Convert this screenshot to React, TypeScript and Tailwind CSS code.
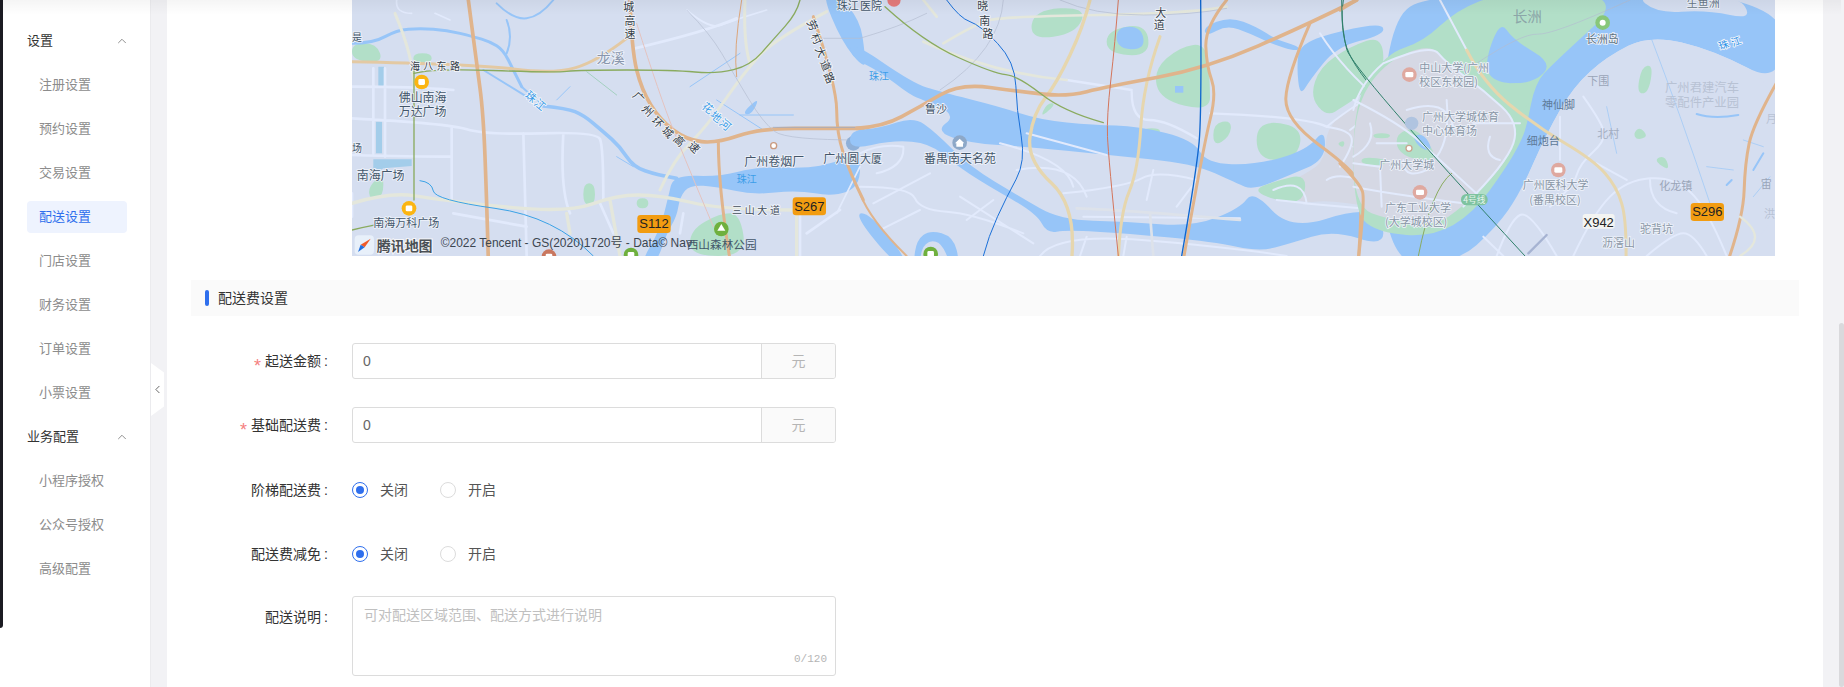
import { ChevronLeft, ChevronUp } from "lucide-react";

// rounds the corners of a traced outline, so "M.. L.. L.. Z" reads like a map shape
const smooth = (d: string) =>
  d
    .split("M")
    .filter((s) => s.trim())
    .map((sub) => {
      const closed = sub.includes("Z");
      const pts = (sub.match(/-?\d+,-?\d+/g) ?? []).map((p) => p.split(",").map(Number));
      const mid = (a: number[], b: number[]) => `${(a[0] + b[0]) / 2},${(a[1] + b[1]) / 2}`;
      if (pts.length < 3) return `M${pts.map((p) => p.join(",")).join(" L")}`;
      if (closed) {
        let out = `M${mid(pts[pts.length - 1], pts[0])}`;
        pts.forEach((p, i) => {
          out += ` Q${p[0]},${p[1]} ${mid(p, pts[(i + 1) % pts.length])}`;
        });
        return out + " Z";
      }
      let out = `M${pts[0].join(",")}`;
      for (let i = 1; i < pts.length - 1; i++) {
        const end = i === pts.length - 2 ? pts[i + 1].join(",") : mid(pts[i], pts[i + 1]);
        out += ` Q${pts[i][0]},${pts[i][1]} ${end}`;
      }
      return out;
    })
    .join(" ");

const P = ({ d, c, w }: { d: string; c: string; w: number }) => (
  <path d={smooth(d)} stroke={c} strokeWidth={w} fill="none" strokeLinejoin="round" strokeLinecap="round" />
);

const F = ({ d, c }: { d: string; c: string }) => <path d={smooth(d)} fill={c} />;

const ORANGE = "#e0b48c";
const YELLOW = "#e6d6ae";
const WHITE = "#e2eafc";
const BEIGE = "#e4e7dc";
const WATER = "#97c5f8";
const GREEN = "#b2dfc8";

const T = ({
  x,
  y,
  s = 36,
  c = "#43566a",
  children,
  halo = true,
}: {
  x: number;
  y: number;
  s?: number;
  c?: string;
  children: string;
  halo?: boolean;
}) => (
  <text
    x={x}
    y={y}
    fontSize={s}
    fill={c}
    stroke={halo ? "#eef2fa" : "none"}
    strokeWidth={halo ? 5 : 0}
    paintOrder="stroke"
    fontFamily="'Noto Sans CJK SC', sans-serif"
  >
    {children}
  </text>
);

// road names run along the road, one rotated glyph per point
const Along = ({ pts, text, s = 33, c = "#333d48" }: { pts: [number, number, number][]; text: string; s?: number; c?: string }) => (
  <>
    {pts.map(([x, y, r], i) => (
      <text
        key={i}
        x={x}
        y={y}
        fontSize={s}
        fill={c}
        stroke="#f3f5fa"
        strokeWidth={5}
        paintOrder="stroke"
        textAnchor="middle"
        dominantBaseline="central"
        transform={`rotate(${r} ${x} ${y})`}
        fontFamily="'Noto Sans CJK SC', sans-serif"
      >
        {text[i]}
      </text>
    ))}
  </>
);

const Badge = ({ x, y, w = 100, label, bg = "#f29c11" }: { x: number; y: number; w?: number; label: string; bg?: string }) => (
  <g>
    <rect x={x} y={y} width={w} height={54} rx={10} fill={bg} />
    <text x={x + w / 2} y={y + 40} fontSize={39} fill="#222" textAnchor="middle" fontFamily="'Liberation Sans', sans-serif">
      {label}
    </text>
  </g>
);

const Pin = ({ x, y, c, r = 22, inner = "#fff" }: { x: number; y: number; c: string; r?: number; inner?: string }) => (
  <g>
    <circle cx={x} cy={y} r={r} fill={c} />
    <rect x={x - r * 0.45} y={y - r * 0.4} width={r * 0.9} height={r * 0.8} rx={4} fill={inner} />
  </g>
);

const MapView = () => (
  <svg viewBox="352 0 1423 256" className="block w-[1423px] h-[256px] shrink-0">
    <rect x="352" y="0" width="1423" height="256" fill="#d5def0" />

    {/* left part */}
    <g transform="translate(340 0) scale(0.33333)">
      <F c={GREEN} d="M36,130 L110,130 L130,190 L36,180 Z M220,160 L275,160 L275,190 L220,190 Z M85,560 L130,520 L130,590 L90,600 Z M730,550 L765,550 L765,615 L730,615 Z M1050,690 L1140,640 L1200,640 L1220,768 L1050,768 Z M890,595 L925,595 L925,625 L890,625 Z" />
      <path fill="#a3cdea" d="M108,365 L126,365 L126,460 L108,460 Z M115,200 L132,200 L132,260 L115,260 Z M100,478 L215,478 L215,498 L130,505 L100,525 Z" />
      <P c={WATER} w={9} d="M36,130 L100,130 L170,90 L240,85 L320,90 L400,110 L450,125 L490,150 L520,210 L545,260" />
      <P c={WATER} w={11} d="M610,318 L680,325 L730,345 L790,395 L840,440 L880,500 L950,525 L1010,535" />
      <P c={WATER} w={6} d="M545,260 L610,318 M430,210 L560,290 M500,60 L520,110 L500,160 M470,10 L520,60 L600,50 L640,0" />
      <F c={WATER} d="M1000,525 L1140,530 L1250,500 L1400,505 L1480,490 L1560,455 L1560,560 L1480,590 L1370,570 L1240,585 L1130,560 L1050,555 L1020,590 L1010,650 L980,700 L950,790 L900,790 L960,690 L985,590 Z" />
      <F c={WATER} d="M1445,-20 L1490,-20 L1560,60 L1575,160 L1575,210 L1505,125 Z M1205,340 L1260,290 L1235,345 Z" />
      <P c={WATER} w={3} d="M690,260 L650,300 M1050,260 L1200,160 M1130,300 L1270,390 M1200,345 L1360,345 M830,470 L880,500" />

      <P c={WHITE} w={8} d="M36,260 L220,260 L340,270 M36,355 L320,370 L440,405 L770,395 L790,440 L790,600 M36,465 L210,470 L335,470 M100,205 L100,460 M135,205 L135,470 M335,380 L335,600 M550,400 L560,768 M670,400 L660,570 L690,640 M885,145 L1100,95 L1190,55 M36,580 L36,650 M1030,640 L1020,700 M1400,700 L1500,630 M1380,640 L1380,768 M340,640 L560,680 M780,610 L820,700" />
      <P c={WHITE} w={5} d="M170,0 L165,40 L215,40 M285,40 L330,60 M1040,30 L1110,90 L1180,60 L1280,30 M1490,640 L1560,500" />

      <P c={BEIGE} w={9} d="M165,40 L220,170 L222,260" />
      <P c={BEIGE} w={9} d="M1215,0 L1210,130 L1230,190 M1460,35 L1300,120 L1210,220 L1100,380 L1000,480 L960,570" />
      <P c={BEIGE} w={10} d="M36,610 L150,575 L300,600 L680,640 L830,585 L960,585 L1150,630 L1360,630 M810,600 L840,768 M1370,640 L1370,768 M680,640 L690,700" />
      <P c="#e3c9a3" w={9} d="M36,185 L400,192 L640,222 L770,185 L860,115" />

      <P c="#dca67a" w={3} d="M1205,0 L1180,150 L1190,230" />
      <P c={ORANGE} w={11} d="M385,0 L410,190 L430,340 L440,600 L445,780" />
      <P c={ORANGE} w={11} d="M870,0 L875,150 L905,270 L960,360 L1040,420 L1130,430 L1260,385 L1470,385 L1570,385" />
      <P c={ORANGE} w={9} d="M1135,425 L1135,560 L1170,780" />
      <P c={ORANGE} w={9} d="M1420,50 L1490,260 L1490,400 L1530,520 L1570,600" />
      <P c="#e4c3c0" w={3} d="M890,70 L960,290 L1040,490 L1120,680" />
      <P c="#b4bdd0" w={2} d="M1040,30 L1110,100 L1180,220 L1270,370 L1340,420 L1560,420 M1440,115 L1560,115" />
      <P c="#93a8cc" w={2} d="M1300,382 L1560,382" />

      <P c="#8aab5f" w={4} d="M222,205 L222,600 M36,690 L100,675 L130,670" />
      <P c="#8aab5f" w={4} d="M222,220 L280,205 L640,218 L720,210 L1000,210 L1130,222 L1232,196 L1300,118 L1370,40 L1380,0" />
      <P c="#a4d0c0" w={3} d="M740,215 L830,285" />
      <P c="#3aa2e6" w={3} d="M240,542 L275,546 L285,600 L645,650 L760,768" />

      <T x={770} y={190} s={42} c="#8996ac">龙溪</T>
      <text x={210} y={210} fontSize={30} fill="#333d48" stroke="#f3f5fa" strokeWidth={5} paintOrder="stroke" letterSpacing={10} fontFamily="'Noto Sans CJK SC', sans-serif">海八东路</text>
      <T x={176} y={306}>佛山南海</T>
      <T x={176} y={348}>万达广场</T>
      <T x={50} y={540}>南海广场</T>
      <T x={100} y={682} s={33}>南海万科广场</T>
      <T x={36} y={122} s={30}>是</T>
      <T x={36} y={455} s={30}>场</T>
      <T x={1213} y={498}>广州卷烟厂</T>
      <T x={1450} y={490}>广州圆</T>
      <T x={1190} y={548} s={30} c="#3b9de8" halo={false}>珠江</T>
      <text x={1176} y={642} fontSize={30} fill="#444f5c" stroke="#eef2fa" strokeWidth={5} paintOrder="stroke" letterSpacing={8} fontFamily="'Noto Sans CJK SC', sans-serif">三山大道</text>
      <Along pts={[[575, 288, 40], [602, 312, 40]]} text="珠江" c="#3b9de8" />
      <Along pts={[[1105, 322, 40], [1130, 348, 40], [1158, 372, 40]]} text="花地河" c="#3b9de8" />
      <Along pts={[[866, 18, 0], [870, 60, 0], [870, 100, 0]]} text="城高速" />
      <Along pts={[[898, 290, 45], [925, 330, 45], [955, 365, 45], [985, 395, 45], [1020, 420, 45], [1065, 440, 45]]} text="广州环城高速" />
      <Along pts={[[1420, 75, 65], [1432, 115, 65], [1445, 155, 65], [1460, 195, 65], [1470, 232, 65]]} text="劳村大道路" />
      <T x={1490} y={30} s={33}>珠江</T>

      <Pin x={245} y={246} c="#fbb512" />
      <Pin x={207} y={625} c="#fbb512" />
      <circle cx={1301} cy={437} r={9} fill="#fff" stroke="#c99a80" strokeWidth={4} />
      <circle cx={1540} cy={430} r={22} fill="#8fb0d8" />
      <circle cx={1144} cy={687} r={22} fill="#6fb03e" />
      <path d="M1144,672 L1156,692 L1132,692 Z" fill="#fff" />
      <Pin x={627} y={770} c="#c9775f" />
      <Pin x={873} y={765} c="#6fb03e" />
      <Badge x={892} y={645} label="S112" />
      <Badge x={1358} y={592} label="S267" />
    </g>

    {/* middle part */}
    <g transform="translate(860 0) scale(0.33333)">
      <F c={GREEN} d="M520,30 L680,20 L650,100 L510,120 Z M880,210 L960,140 L1040,130 L1050,250 L1050,335 L900,300 Z M1190,360 L1330,380 L1310,480 L1190,480 Z M560,310 L590,310 L540,355 Z M850,385 L900,385 L900,405 L850,400 Z M1060,370 L1115,360 L1110,410 L1060,440 Z" />
      <F c={GREEN} d="M740,90 L860,70 L870,170 L740,160 Z" />
      <F c={WATER} d="M770,80 L845,80 L855,150 L770,145 Z" />
      <path fill={WATER} d="M945,258 L970,258 L970,278 L945,278 Z" />
      <F c={WATER} d="M-30,120 L160,250 L240,275 L420,320 L540,360 L700,375 L835,378 L1000,420 L1040,490 L1190,495 L1340,450 L1395,385 L1395,480 L1290,525 L1180,570 L1130,550 L1000,490 L740,465 L500,440 L330,430 L225,395 L290,345 L190,300 L150,285 L60,215 L-30,170 Z" />
      <F c={WATER} d="M-30,390 L60,385 L160,350 L225,395 L330,500 L480,590 L600,660 L800,665 L1000,680 L1140,625 L1180,570 L1290,690 L1500,625 L1570,660 L1570,740 L1420,690 L1290,730 L1200,755 L1060,725 L800,700 L620,690 L560,700 L530,640 L380,555 L280,490 L210,430 L100,420 L-30,450 Z" />
      <F c={WATER} d="M-20,640 L30,640 L150,790 L100,790 Z M160,790 L170,720 L210,690 L280,710 L300,790 L270,790 L245,730 L210,720 L185,745 L180,790 Z" />
      <F c={WATER} d="M1320,130 L1450,90 L1570,70 L1570,105 L1430,140 L1350,240 L1320,290 L1310,200 Z M1030,80 L1110,50 L1190,80 L1250,120 L1320,140 L1310,155 L1230,130 L1170,100 L1100,75 L1040,110 Z" />
      <F c="#d5d8e4" d="M1400,380 L1500,300 L1570,285 L1570,625 L1400,600 L1330,610 L1240,570 L1340,520 L1395,480 Z" />
      <F c={GREEN} d="M1350,290 L1380,200 L1470,140 L1570,105 L1570,240 L1450,320 L1400,350 Z M1180,570 L1240,545 L1340,520 L1330,610 L1240,600 Z M1500,490 L1560,480 L1560,510 L1510,500 Z M1430,430 L1455,420 L1450,445 Z" />

      <P c={WHITE} w={7} d="M815,275 L815,360 L920,360 L1010,415 M1050,340 L1340,350 L1400,380 M620,240 L815,270" />
      <P c={WHITE} w={6} d="M0,560 L150,560 L180,630 L340,640 L490,700 M70,685 L180,630 M130,440 L60,430 L0,460 M130,440 L135,500 L50,520 M210,520 L40,610 M300,590 L520,730 M400,600 L320,660 M420,430 L620,480 L640,560 M470,510 L640,480 L680,590 M610,580 L800,560 L890,510 L1010,540 M880,510 L860,600 M1010,540 L950,620 M540,768 L590,700 L1100,740 L1280,768 M660,768 L680,710 M790,768 L800,710 M670,650 L1140,655 M500,400 L740,465" />
      <P c={WHITE} w={6} d="M1240,570 L1330,530 L1340,610 M1340,610 L1250,600 M1330,610 L1560,630 M1400,540 L1440,510 L1560,560 M1400,380 L1470,390 L1480,440 L1440,500 M1380,100 L1450,210 L1560,300 M1400,380 L1500,300 L1560,280 M1470,390 L1560,320 M1480,440 L1560,470" />
      <P c="#dde2ea" w={8} d="M650,625 L800,630 L1140,660 M870,640 L880,768" />
      <P c={BEIGE} w={8} d="M250,130 L350,70 L430,50 L1000,40 L1100,20" />
      <P c={BEIGE} w={8} d="M190,0 L230,50 M190,125 L400,220 L620,240" />
      <P c="#b4bdd0" w={2} d="M0,115 L120,80 L200,40 M600,0 L700,45 L1000,45 L1100,25 M240,270 L420,150 L430,0" />

      <P c={YELLOW} w={10} d="M690,0 L670,80 L590,250 L520,340 L500,480 L650,620 L635,780" />
      <P c={YELLOW} w={9} d="M900,110 L850,250 L835,510 L780,640 L775,780" />
      <P c={ORANGE} w={11} d="M-10,385 L70,380 L180,320 L300,250 L480,275 L620,290 L740,260 L1040,205 L1350,70 L1490,0" />
      <P c={ORANGE} w={9} d="M1100,0 L1035,80 L1040,200 L1070,280 L1030,440 L970,780" />
      <P c={ORANGE} w={9} d="M1350,70 L1280,230 L1275,360 L1480,510 L1510,580 L1495,780" />
      <P c={ORANGE} w={6} d="M0,580 L30,660 L140,768" />

      <P c="#1a6fd8" w={3} d="M260,0 L300,55 L360,75 L465,185 L470,330 L497,485 L440,590 L385,710 L370,768" />
      <P c="#d4745a" w={3} d="M775,0 L765,130 L740,350 L745,470 L775,768" />
      <P c="#0f66cf" w={4} d="M1022,0 L1025,340 L1010,510 L965,768" />
      <P c="#8aab5f" w={4} d="M75,20 L190,125 L400,220 L475,228 L610,335 L730,368" />
      <P c="#2f7f6a" w={3} d="M1450,0 L1440,60 L1470,190 L1560,290" />

      <T x={0} y={30} s={33}>医院</T>
      <T x={27} y={240} s={30} c="#3b9de8" halo={false}>珠江</T>
      <T x={195} y={338} s={33}>鲁沙</T>
      <T x={0} y={490} s={33}>大厦</T>
      <T x={192} y={490}>番禺南天名苑</T>
      <Along pts={[[368, 15, 0], [374, 60, 0], [384, 98, 0]]} text="晓南路" />
      <Along pts={[[902, 35, 0], [898, 72, 0]]} text="大道" />

      <circle cx={102} cy={0} r={20} fill="#e47b7b" />
      <circle cx={299} cy={428} r={22} fill="#8da8c8" />
      <path d="M299,416 L313,430 L309,430 L309,440 L289,440 L289,430 L285,430 Z" fill="#fff" />
      <Pin x={212} y={762} c="#6fb03e" />
    </g>

    {/* right part */}
    <g transform="translate(1340 0) scale(0.33333)">
      <F c={WATER} d="M130,70 L290,-30 L1330,-30 L1330,260 L1120,150 L930,105 L800,170 L700,260 L620,400 L540,580 L470,680 L350,790 L120,790 Z" />
      <F c="#d5def0" d="M930,105 L1120,150 L1330,260 L1330,800 L470,800 L540,580 L620,400 L700,260 L800,170 Z M880,-20 L1190,-20 L1240,60 L1100,30 L950,40 Z" />
      <F c={GREEN} d="M40,300 L140,160 L250,125 L350,30 L480,-20 L870,-20 L640,190 L585,250 L560,380 L540,430 L500,500 L400,640 L280,710 L120,700 L40,640 Z" />
      <F c={WATER} d="M480,60 L520,120 L640,190 L580,250 L470,250 L430,200 Z" />
      <F c={GREEN} d="M470,250 L585,250 L570,320 L520,330 Z" />
      <F c="#d5d8e4" d="M40,330 L130,190 L270,130 L320,190 L430,270 L540,370 L500,490 L370,620 L280,680 L150,660 L40,620 Z" />
      <F c={GREEN} d="M170,400 L230,380 L300,480 L220,480 L170,450 Z M70,470 L150,480 L120,500 L60,490 Z M100,400 L150,400 L150,415 L100,415 Z" />
      <F c={WATER} d="M215,410 L250,400 L280,450 L245,450 Z" />

      <P c={WHITE} w={6} d="M130,190 L60,250 L40,330 M130,190 L270,130 L320,190 L430,270 L540,370 L500,490 L370,620 M40,300 L180,370 L300,480 L420,590 M90,370 L110,430 L40,470 M110,430 L200,430 M200,330 L320,290 L340,380 M40,560 L140,580 L370,610 M120,500 L125,620 M190,480 L190,550 L280,500 M320,300 L330,420 L290,470 M40,490 L120,500 M450,410 L430,470 L480,480 M540,370 L400,370" />
      <P c={WHITE} w={6} d="M300,0 L380,150 M470,768 L510,660 L570,630 L650,768 M430,710 L490,768 M700,768 L760,640 L860,540 L1000,530 L1100,620 L1160,768 M660,350 L660,480 M730,290 L780,360 L800,420 L720,490 L700,560 L630,620 M770,490 L860,540 M930,540 L930,620 L1010,640 M920,768 L1000,700 L1060,700 L1100,768" />
      <P c="#b4bdd0" w={2} d="M410,190 L545,100 L640,105 L870,0" />
      <P c="#a6b3d2" w={7} d="M565,760 L620,705" />
      <P c={WATER} w={2} d="M930,105 L1020,340 L1110,610 M1210,420 L1270,440 M800,320 L830,460 M1100,500 L1180,510 M1240,590 L1290,530" />
      <P c={WATER} w={6} d="M1070,342 L1120,358 L1195,345 M1240,510 L1270,460 M1160,555 L1175,540" />
      <F c={GREEN} d="M905,200 L940,195 L925,280 L890,280 Z M880,400 L900,380 L925,410 L890,420 Z M940,480 L975,465 L990,515 Z" />

      <P c={YELLOW} w={9} d="M380,150 L430,250 L590,380 L760,480 L830,560 L860,660 L858,780" />
      <P c={ORANGE} w={10} d="M0,30 L50,0" />
      <P c={ORANGE} w={9} d="M0,490 L60,550 L75,600 L55,780" />
      <P c={ORANGE} w={9} d="M1320,230 L1240,370 L1215,490 L1210,650 L1165,780" />
      <P c={BEIGE} w={7} d="M1200,650 L1290,715 L1200,768" />
      <P c="#8aab5f" w={3} d="M335,520 L275,565 L235,768" />
      <P c="#2f7f6a" w={3} d="M5,0 L5,90 L35,205 L555,768" />

      <T x={518} y={66} s={44} c="#8ca6a8" halo={false}>长洲</T>
      <T x={1040} y={22} s={33} c="#667788">生鱼洲</T>
      <T x={737} y={128} s={33} c="#5b7080">长洲岛</T>
      <T x={238} y={215} s={33} c="#8996a5">中山大学(广州</T>
      <T x={238} y={257} s={33} c="#8996a5">校区东校园)</T>
      <T x={246} y={364} s={33} c="#8996a5">广州大学城体育</T>
      <T x={246} y={406} s={33} c="#8996a5">中心体育场</T>
      <T x={118} y={506} s={33} c="#8996a5">广州大学城</T>
      <T x={135} y={636} s={33} c="#8996a5">广东工业大学</T>
      <T x={135} y={678} s={33} c="#8996a5">(大学城校区)</T>
      <T x={742} y={256} s={33} c="#9aa5b8" halo={false}>下围</T>
      <T x={606} y={326} s={33} c="#5e7a98" halo={false}>神仙脚</T>
      <T x={560} y={435} s={33} c="#5e7a98" halo={false}>细炮台</T>
      <T x={772} y={414} s={33} c="#a3adc0" halo={false}>北村</T>
      <T x={975} y={276} s={37} c="#b8c2d4" halo={false}>广州君建汽车</T>
      <T x={975} y={322} s={37} c="#b8c2d4" halo={false}>零配件产业园</T>
      <T x={548} y={568} s={33} c="#8996a5">广州医科大学</T>
      <T x={568} y={612} s={33} c="#8996a5">(番禺校区)</T>
      <T x={958} y={570} s={33} c="#9aa5b8" halo={false}>化龙镇</T>
      <T x={900} y={700} s={33} c="#8996a5">驼背坑</T>
      <T x={786} y={742} s={33} c="#8996a5">沥滘山</T>
      <T x={1278} y={368} s={33} c="#b8c2d4" halo={false}>月</T>
      <T x={1262} y={564} s={33} c="#9aa5b8" halo={false}>宙</T>
      <T x={1272} y={654} s={33} c="#b8c2d4" halo={false}>洪</T>
      <Along pts={[[1150, 132, -20], [1188, 122, -20]]} text="珠江" c="#1f8fe8" s={30} />

      <circle cx={788} cy={68} r={22} fill="#88c77a" />
      <circle cx={788} cy={68} r={9} fill="#fff" />
      <circle cx={208} cy={224} r={22} fill="#dfa9a0" />
      <rect x={196} y={216} width={24} height={16} rx={4} fill="#fff" />
      <circle cx={215} cy={370} r={20} fill="#b0c4e0" />
      <circle cx={207} cy={445} r={9} fill="#fff" stroke="#c9a590" strokeWidth={4} />
      <circle cx={240} cy={577} r={22} fill="#dfa9a0" />
      <rect x={228} y={569} width={24} height={16} rx={4} fill="#fff" />
      <circle cx={655} cy={510} r={22} fill="#dfa9a0" />
      <rect x={643} y={502} width={24} height={16} rx={4} fill="#fff" />
      <rect x={363} y={582} width={80} height={34} rx={16} fill="#7fc3a0" />
      <text x={403} y={608} fontSize={26} fill="#e8f5ee" textAnchor="middle" fontFamily="'Noto Sans CJK SC', sans-serif">4号线</text>

      <rect x={728} y={642} width={96} height={44} rx={8} fill="#f3f4f2" />
      <text x={776} y={680} fontSize={39} fill="#222" textAnchor="middle" fontFamily="'Liberation Sans', sans-serif">X942</text>
      <Badge x={1052} y={609} label="S296" />
    </g>

    {/* logo and copyright */}
    <g transform="translate(340 0) scale(0.33333)">
      <rect x={44} y={706} width={58} height={58} rx={12} fill="#e8f0fa" />
      <path d="M92,716 L74,742 L62,734 Z" fill="#ef5a2a" />
      <path d="M62,734 L74,742 L54,756 Z" fill="#1f6fe0" />
      <text x={110} y={752} fontSize={42} fontWeight={700} fill="#4a4f55" stroke="#f5f6f8" strokeWidth={6} paintOrder="stroke" fontFamily="'Noto Sans CJK SC', sans-serif">腾讯地图</text>
      <text x={302} y={742} fontSize={36} fill="#3c4650" fontFamily="'Liberation Sans', 'Noto Sans CJK SC', sans-serif">©2022 Tencent - GS(2020)1720号 - Data© Nav</text>
      <text x={1040} y={746} fontSize={35} fill="#43566a" fontFamily="'Noto Sans CJK SC', sans-serif">西山森林公园</text>
    </g>
  </svg>
);

const NavGroup = ({ title, items, active }: { title: string; items: string[]; active?: string }) => (
  <div className="flex flex-col">
    <div className="flex h-[44px] items-center justify-between pl-[24px] pr-[21px] text-[13px] text-[#333333]">
      <span>{title}</span>
      <ChevronUp size={14} strokeWidth={1.5} className="text-[#808080]" />
    </div>
    {items.map((item) => (
      <div key={item} className="flex h-[44px] items-center pl-[24px]">
        <div
          className={
            item === active
              ? "flex h-[32px] w-[100px] items-center rounded bg-[#eef3fe] pl-[12px] text-[13px] text-[#2f6fed]"
              : "flex h-[32px] w-[100px] items-center pl-[12px] text-[13px] text-[#8c8c8c]"
          }
        >
          {item}
        </div>
      </div>
    ))}
  </div>
);

const Label = ({ text, required }: { text: string; required?: boolean }) => (
  <div className="flex h-[36px] w-[137px] shrink-0 justify-end text-[14px] leading-[36px] text-[#333333]">
    {required && <span className="mr-[4px] text-[18px] leading-[46px] text-[#f57f7f]">*</span>}
    <span>{text}</span>
    <span className="ml-[3px]">:</span>
  </div>
);

const AmountRow = ({ label }: { label: string }) => (
  <div className="flex h-[36px] gap-[24px]">
    <Label text={label} required />
    <div className="flex h-[36px] w-[484px] overflow-hidden rounded-[3px] border border-[#dcdcdc]">
      <input
        defaultValue="0"
        className="min-w-0 flex-1 px-[10px] text-[14px] text-[#666666] outline-none"
      />
      <div className="flex w-[74px] items-center justify-center border-l border-[#dcdcdc] bg-[#fafafa] text-[14px] text-[#b5b5b5]">
        元
      </div>
    </div>
  </div>
);

const Radio = ({ text, on }: { text: string; on?: boolean }) => (
  <div className="flex w-[88px] items-center gap-[12px] text-[14px] text-[#555555]">
    {on ? (
      <span className="flex h-[16px] w-[16px] items-center justify-center rounded-full border border-[#2f6fed]">
        <span className="h-[8px] w-[8px] rounded-full bg-[#2f6fed]" />
      </span>
    ) : (
      <span className="h-[16px] w-[16px] rounded-full border border-[#dcdcdc]" />
    )}
    <span>{text}</span>
  </div>
);

const RadioRow = ({ label }: { label: string }) => (
  <div className="flex h-[36px] gap-[24px]">
    <Label text={label} />
    <div className="flex items-center">
      <Radio text="关闭" on />
      <Radio text="开启" />
    </div>
  </div>
);

export default function App() {
  return (
    <div className="relative flex h-[687px] w-full overflow-hidden bg-white font-['Liberation_Sans','Noto_Sans_CJK_SC',sans-serif]">
      <div className="h-[628px] w-[3px] shrink-0 rounded-br-[3px] bg-[#1b1b22]" />
      <aside className="w-[147px] shrink-0 pt-[19px]">
        <NavGroup
          title="设置"
          active="配送设置"
          items={["注册设置", "预约设置", "交易设置", "配送设置", "门店设置", "财务设置", "订单设置", "小票设置"]}
        />
        <NavGroup title="业务配置" items={["小程序授权", "公众号授权", "高级配置"]} />
      </aside>

      <div className="relative w-[17px] shrink-0 border-l border-[#ebebee] bg-[#f2f2f5]">
        <div className="absolute left-0 top-[363px] flex h-[53px] w-[13px] items-center justify-center bg-white [clip-path:polygon(0_0,100%_18%,100%_82%,0_100%)]">
          <ChevronLeft size={13} strokeWidth={1.75} className="text-[#606060]" />
        </div>
      </div>

      <main className="w-[1656px] shrink-0 px-[24px]">
        <div className="pl-[161px]">
          <MapView />
        </div>

        <div className="mt-[24px] flex h-[36px] w-[1608px] items-center gap-[9px] bg-[#fafafa] pl-[14px] text-[14px] text-[#333333]">
          <span className="h-[16px] w-[4px] rounded-[2px] bg-[#2f6fed]" />
          配送费设置
        </div>

        <div className="mt-[27px] flex flex-col">
          <AmountRow label="起送金额" />
          <div className="mt-[28px]">
            <AmountRow label="基础配送费" />
          </div>
          <div className="mt-[29px]">
            <RadioRow label="阶梯配送费" />
          </div>
          <div className="mt-[28px]">
            <RadioRow label="配送费减免" />
          </div>
          <div className="mt-[24px] flex gap-[24px]">
            <div className="pt-[3px]">
              <Label text="配送说明" />
            </div>
            <div className="relative h-[80px] w-[484px] rounded-[3px] border border-[#dcdcdc]">
              <textarea
                placeholder="可对配送区域范围、配送方式进行说明"
                className="h-full w-full resize-none bg-transparent px-[11px] py-[8px] text-[14px] text-[#666666] outline-none placeholder:text-[#c0c0c0]"
              />
              <span className="absolute bottom-[8px] right-[8px] font-['Liberation_Mono',monospace] text-[11px] text-[#b5b5b5]">
                0/120
              </span>
            </div>
          </div>
        </div>
      </main>

      <div className="relative w-[21px] shrink-0 bg-[#f2f2f5]">
        <div className="absolute left-[16px] top-[323px] h-[364px] w-[5px] rounded-[3px] bg-[#d9d9dc]" />
      </div>

      <div className="pointer-events-none absolute inset-x-[3px] top-0 h-[15px] bg-gradient-to-b from-black/[0.04] to-transparent" />
    </div>
  );
}
